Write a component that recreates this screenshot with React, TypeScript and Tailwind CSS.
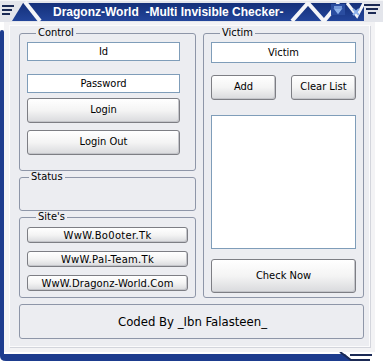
import React from 'react';

const font = "font-['Tahoma','DejaVu_Sans_Condensed','DejaVu_Sans',sans-serif]";

function TitleBar() {
  return (
    <div className="relative h-[22px] w-full">
      <svg className="absolute inset-0" width="383" height="22" viewBox="0 0 383 22">
        <rect x="0" y="0" width="383" height="22" fill="#e3e5eb" />
        <defs>
          <linearGradient id="nav" x1="0" y1="0" x2="0" y2="1">
            <stop offset="0" stopColor="#14307a" />
            <stop offset="1" stopColor="#23459a" />
          </linearGradient>
        </defs>
        <polygon points="12,21 23,3 370,3 370,21" fill="url(#nav)" />
        <path d="M25,2 L40,21" stroke="#f4f5f8" strokeWidth="4" />
        <path d="M292,21 L308,3 L324,21 L339,3" stroke="#f4f5f8" strokeWidth="4" fill="none" strokeLinejoin="bevel" />
        <path d="M347,3 L357,16 L364,3" stroke="#f4f5f8" strokeWidth="3" fill="none" />
        <rect x="331" y="4" width="14" height="11" fill="#2a4da0" />
        <path d="M334,7 L342,7 M335,9 L341,9 L338,13 Z" stroke="#8db1ea" strokeWidth="1.5" fill="#8db1ea" />
        <path d="M353,9 L359,15 M359,9 L353,15" stroke="#8db1ea" strokeWidth="2" />
        <rect x="364" y="2" width="19" height="20" fill="#e3e5eb" />
        <path d="M364,5 L380,5 M366,9 L378,9 M368,13 L376,13" stroke="#1b2a55" strokeWidth="2" />
        <path d="M2,6 L14,6 M2,10 L12,10 M2,14 L10,14" stroke="#1b2a55" strokeWidth="2" />
        <rect x="0" y="0" width="383" height="1" fill="#f5f6f8" />
      </svg>
      <div className="absolute inset-0 flex items-center pl-[53px] pt-[1px] font-['Liberation_Sans',sans-serif] text-[12px] font-bold text-white whitespace-pre">
        Dragonz-World  -Multi Invisible Checker-
      </div>
    </div>
  );
}

function Btn({ label, className, small }: { label: string; className: string; small?: boolean }) {
  return (
    <button
      className={
        'flex items-center justify-center rounded-[3px] border border-[#7d7e84] bg-linear-to-b from-[#ffffff] via-[#f4f4f4] to-[#d9dadd] text-black shadow-[inset_-1px_-1px_0_#c4c5ca] ' +
        (small ? "font-['DejaVu_Sans',sans-serif] text-[10px] " : 'text-[11px] ') +
        className
      }
    >
      {label}
    </button>
  );
}

function Field({ value, className }: { value: string; className: string }) {
  return (
    <input
      readOnly
      value={value}
      className={'border border-[#7f9db9] bg-white text-center text-[11px] text-black outline-none ' + className}
    />
  );
}

function Group({ title, className, children }: { title: string; className: string; children?: React.ReactNode }) {
  return (
    <fieldset className={'rounded-[3px] border border-[#8e96a8] ' + className}>
      <legend className="ml-[9px] px-[2px] text-[11px] leading-[12px] text-black">{title}</legend>
      {children}
    </fieldset>
  );
}

export default function App() {
  return (
    <div className={'relative h-[363px] w-[383px] overflow-hidden bg-white ' + font}>
      <TitleBar />
      <div className="flex h-[330px] w-[375px]">
        <div className="mt-[8px] w-[4px] rounded-t-[3px] bg-[#1d3c8e]" />
        <div className="flex-1 bg-[#f3f3f5] px-[5px] pt-[3px] pb-[5px]">
          <div className="h-full border border-[#fbfbfc] bg-[#ecedf1] pl-[9px] pt-[1px] shadow-[1px_1px_0_#d3d5dc]">
            <div className="grid grid-cols-[177px_161px] gap-x-[7px]">
              <div className="flex flex-col">
                <Group title="Control" className="flex h-[144px] flex-col pl-[7px] pt-[3px]">
                  <Field value="Id" className="h-[19px] w-[153px]" />
                  <Field value="Password" className="mt-[13px] h-[19px] w-[153px]" />
                  <Btn label="Login" className="mt-[5px] h-[25px] w-[153px]" />
                  <Btn label="Login Out" className="mt-[7px] h-[25px] w-[153px]" />
                </Group>
                <Group title="Status" className="h-[40px]" />
                <Group title="Site's" className="flex h-[87px] flex-col gap-[8px] pl-[7px] pt-[4px]">
                  <Btn small label="WwW.Bo0oter.Tk" className="h-[16px] w-[161px] tracking-[0.3px]" />
                  <Btn small label="WwW.Pal-Team.Tk" className="h-[16px] w-[161px] tracking-[0.3px]" />
                  <Btn small label="WwW.Dragonz-World.Com" className="h-[16px] w-[161px] tracking-[0.1px]" />
                </Group>
              </div>
              <Group title="Victim" className="flex h-[271px] flex-col pl-[7px] pt-[3px]">
                <Field value="Victim" className="h-[21px] w-[145px]" />
                <div className="mt-[12px] flex w-[145px] justify-between">
                  <Btn label="Add" className="h-[25px] w-[65px]" />
                  <Btn label="Clear List" className="h-[25px] w-[65px]" />
                </div>
                <div className="mt-[15px] h-[134px] w-[145px] border border-[#7f9db9] bg-white" />
                <Btn label="Check Now" className="mt-[10px] h-[34px] w-[145px]" />
              </Group>
            </div>
            <div className="mt-[6px] flex h-[35px] w-[345px] items-center justify-center rounded-[3px] border border-[#8e96a8] pl-[2px] text-[13px] text-black">
              Coded By _Ibn Falasteen_
            </div>
          </div>
        </div>
      </div>
      <div className="relative h-[11px] w-full">
        <svg className="absolute inset-0" width="383" height="11" viewBox="0 0 383 11">
          <path d="M0,0 L4,0 L4,2 L345,2 L352,9 L6,9 Q0,9 0,4 Z" fill="#1d3c8e" />
          <path d="M340,0 L351,8 L370,8 M350,3 L372,3" stroke="#1b2a55" strokeWidth="2" fill="none" />
        </svg>
      </div>
    </div>
  );
}
